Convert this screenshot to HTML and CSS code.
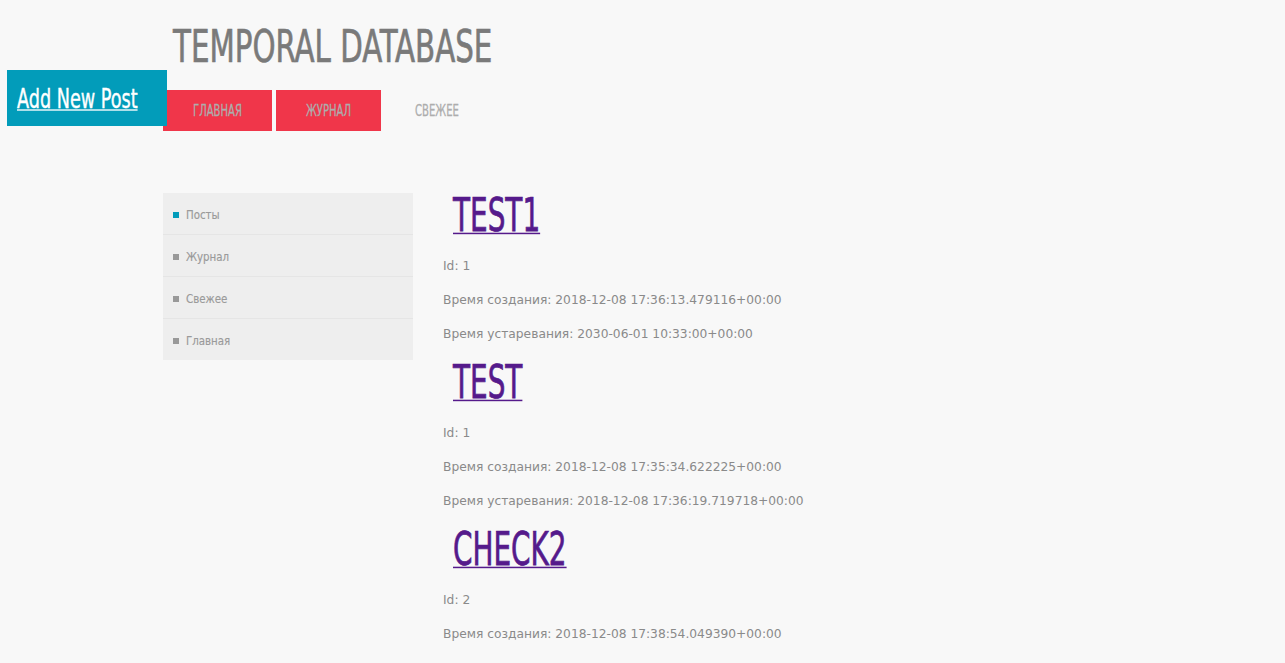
FILE: index.html
```html
<!DOCTYPE html>
<html lang="ru">
<head>
<meta charset="utf-8">
<title>Temporal Database</title>
<link rel="stylesheet" href="styles.css">
</head>
<body>
<div class="page">
  <header class="header">
    <h1 class="site-title"><span class="t-title">TEMPORAL DATABASE</span></h1>
    <nav class="nav">
      <a class="nav-item nav-item--red" href="#"><span class="t-nav">ГЛАВНАЯ</span></a>
      <a class="nav-item nav-item--red" href="#"><span class="t-nav">ЖУРНАЛ</span></a>
      <a class="nav-item" href="#"><span class="t-nav">СВЕЖЕЕ</span></a>
    </nav>
  </header>

  <div class="content">
    <aside class="sidebar">
      <ul class="side-list">
        <li class="side-item side-item--active"><span class="bullet"></span><span class="t-side">Посты</span></li>
        <li class="side-item"><span class="bullet"></span><span class="t-side">Журнал</span></li>
        <li class="side-item"><span class="bullet"></span><span class="t-side">Свежее</span></li>
        <li class="side-item"><span class="bullet"></span><span class="t-side">Главная</span></li>
      </ul>
    </aside>

    <main class="posts">
      <article class="post">
        <h2 class="post-title"><span class="t-post"><a class="post-link" href="#">TEST1</a></span></h2>
        <p class="post-meta">Id: 1</p>
        <p class="post-meta">Время создания: 2018-12-08 17:36:13.479116+00:00</p>
        <p class="post-meta">Время устаревания: 2030-06-01 10:33:00+00:00</p>
      </article>
      <article class="post">
        <h2 class="post-title"><span class="t-post"><a class="post-link" href="#">TEST</a></span></h2>
        <p class="post-meta">Id: 1</p>
        <p class="post-meta">Время создания: 2018-12-08 17:35:34.622225+00:00</p>
        <p class="post-meta">Время устаревания: 2018-12-08 17:36:19.719718+00:00</p>
      </article>
      <article class="post">
        <h2 class="post-title"><span class="t-post"><a class="post-link" href="#">CHECK2</a></span></h2>
        <p class="post-meta">Id: 2</p>
        <p class="post-meta">Время создания: 2018-12-08 17:38:54.049390+00:00</p>
        <p class="post-meta">Время устаревания: 2030-06-01 10:33:00+00:00</p>
      </article>
    </main>
  </div>
</div>

<a class="add-post" href="#"><span class="t-add">Add New Post</span></a>
</body>
</html>
```

FILE: styles.css
```css
html, body {
  margin: 0;
  padding: 0;
  background: #f8f8f8;
}

body {
  font-family: "DejaVu Sans", "Noto Sans", sans-serif;
  font-size: 12.25px;
  color: #8a8a8a;
  overflow: hidden;
  height: 663px;
}

.page {
  margin-left: 163px;
}

/* Header */
.header {
  padding-top: 16px;
}

.site-title {
  margin: 0;
  padding: 0 10px;
  font-family: "DejaVu Sans Condensed", "DejaVu Sans", sans-serif;
  font-stretch: condensed;
  font-weight: normal;
  font-size: 32.6px;
  line-height: 70px;
  color: #7a7a7a;
  -webkit-text-stroke: 0.5px #7a7a7a;
}

.t-title {
  display: inline-block;
  transform: scaleY(1.35);
  transform-origin: 0 46.3px;
}

.nav {
  display: flex;
  gap: 4px;
  margin-top: 4px;
}

.nav-item {
  display: block;
  padding: 0 30px;
  height: 41px;
  line-height: 41px;
  font-family: "DejaVu Sans Condensed", "DejaVu Sans", sans-serif;
  font-stretch: condensed;
  font-size: 11.2px;
  color: #adadad;
  text-decoration: none;
  -webkit-text-stroke: 0.2px #adadad;
}

.nav-item--red {
  background: #f0364a;
}

.t-nav {
  display: inline-block;
  transform: translateY(2.6px) scaleY(1.34);
  transform-origin: 0 24.4px;
}

/* Add New Post overlay */
.add-post {
  position: absolute;
  left: 7px;
  top: 70px;
  width: 140px;
  height: 56px;
  padding: 0 10px;
  background: #029cba;
  color: #ffffff;
  font-family: "DejaVu Sans Condensed", "DejaVu Sans", sans-serif;
  font-stretch: condensed;
  font-size: 19.6px;
  line-height: 56px;
  text-decoration: none;
  -webkit-text-stroke: 0.3px #ffffff;
}

.t-add {
  display: inline-block;
  transform: translateY(4.25px) scaleY(1.34);
  transform-origin: 0 34.75px;
  text-decoration: underline;
  text-decoration-thickness: 1px;
  text-underline-offset: 1px;
}

/* Content */
.content {
  display: flex;
  align-items: flex-start;
  gap: 30px;
  margin-top: 59px;
}

.sidebar {
  width: 250px;
  flex: 0 0 250px;
  margin-top: 3px;
  background: #eeeeee;
}

.side-list {
  list-style: none;
  margin: 0;
  padding: 0;
}

.side-item {
  display: flex;
  align-items: flex-start;
  height: 41px;
  line-height: 41px;
  padding-left: 10px;
  border-top: 1px solid #e5e5e5;
  font-family: "DejaVu Sans Condensed", "DejaVu Sans", sans-serif;
  font-stretch: condensed;
  font-size: 11.4px;
  color: #9a9a9a;
  -webkit-text-stroke: 0.15px #9a9a9a;
}

.side-item:first-child {
  border-top: none;
}

.bullet {
  width: 6px;
  height: 6px;
  margin-top: 19px;
  margin-right: 7px;
  background: #999999;
  flex: 0 0 6px;
}

.side-item--active .bullet {
  background: #029cba;
}

.t-side {
  display: inline-block;
  transform: translateY(2.55px) scaleY(1.12);
  transform-origin: 0 24.45px;
}

/* Posts */
.posts {
  flex: 1;
}

.post-title {
  margin: 0;
  padding-left: 10px;
  font-family: "DejaVu Sans Condensed", "DejaVu Sans", sans-serif;
  font-stretch: condensed;
  font-weight: normal;
  font-size: 31px;
  line-height: 53px;
  height: 53px;
}

.t-post {
  display: inline-block;
  transform: translateY(4.3px) scaleY(1.5);
  transform-origin: 0 37.2px;
}

.post-link {
  color: #551a8b;
  text-decoration: underline;
  text-decoration-thickness: 1.4px;
  -webkit-text-stroke: 0.5px #551a8b;
}

.post-meta {
  margin: 12px 0;
  line-height: 22px;
}
```
